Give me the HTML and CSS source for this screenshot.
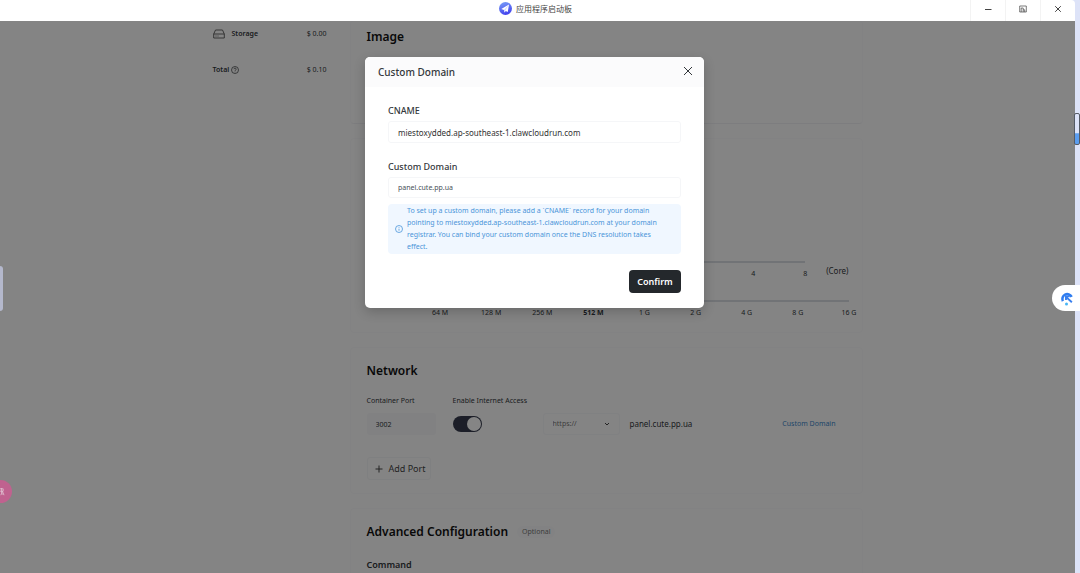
FILE: index.html
```
<!DOCTYPE html>
<html lang="en">

<head>
    <meta charset="UTF-8">
    <meta name="viewport" content="width=device-width, initial-scale=1.0">
    <title>Custom Domain</title>
    <link rel="stylesheet" href="styles.css">
</head>

<body>
    <div class="window">
        <header class="titlebar">
            <div class="app-title">
                <svg class="app-icon" viewBox="0 0 26 26">
                    <defs>
                        <linearGradient id="iconFill" x1="0" y1="0" x2="0.3" y2="1">
                            <stop offset="0" stop-color="#7aa2f7"/>
                            <stop offset="1" stop-color="#4545ee"/>
                        </linearGradient>
                    </defs>
                    <circle cx="13" cy="13" r="13" fill="url(#iconFill)"/>
                    <path d="M20 5 L4.500 14 L10 16 L11 21 L13.500 18 L17.500 20 Z" fill="#fff"/>
                    <path d="M20 5 L10 16 L11 21 L12.500 17 Z" fill="#cdd6ff"/>
                </svg>
                <span lang="zh">应用程序启动板</span>
            </div>
            <div class="window-controls">
                <button type="button" aria-label="Minimize">
                    <svg viewBox="0 0 8 8"><path d="M1 4.500h6.500"/></svg>
                </button>
                <button type="button" aria-label="Restore">
                    <svg class="thin" viewBox="0 0 8 8"><path d="M.7 1h6.600v6H.7z M2.200 7V3h2v4 M4.200 4.800h1.500V7"/></svg>
                </button>
                <button type="button" aria-label="Close window">
                    <svg viewBox="0 0 8 8"><path d="M1.200 1.200l5.600 5.600M6.800 1.200L1.200 6.800"/></svg>
                </button>
            </div>
        </header>

        <div class="workspace">
            <div class="page">
                <aside class="prices">
                    <div class="price-row">
                        <svg class="storage-icon" viewBox="0 0 12 10"><path d="M.7 5L2.500 1h7L11.300 5v4H.7z M.7 5h10.600 M2.500 7h1 M4.500 7h1"/></svg>
                        <b>Storage</b>
                        <span>$ 0.00</span>
                    </div>
                    <div class="price-row">
                        <b>Total</b>
                        <svg class="help-icon" viewBox="0 0 8 8"><circle cx="4" cy="4" r="3.500"/><path d="M2.900 3.200c0-1.500 2.300-1.500 2.300 0 0 .8-1.200.8-1.200 1.700M4 5.600v.6"/></svg>
                        <span>$ 0.10</span>
                    </div>
                </aside>

                <main class="cards">
                    <section class="card image-card">
                        <h2>Image</h2>
                    </section>

                    <section class="card resource-card">
                        <div class="resource-row">
                            <div class="slider">
                                <input type="range" min="0" max="7" value="3" aria-label="CPU">
                                <div class="ticks cpu-ticks">
                                    <span>4</span><span>8</span>
                                </div>
                            </div>
                            <span class="unit">(Core)</span>
                        </div>
                        <div class="resource-row">
                            <div class="slider">
                                <input type="range" min="0" max="8" value="3" aria-label="Memory">
                                <div class="ticks">
                                    <span>64 M</span><span>128 M</span><span>256 M</span><b>512 M</b>
                                    <span>1 G</span><span>2 G</span><span>4 G</span><span>8 G</span><span>16 G</span>
                                </div>
                            </div>
                        </div>
                    </section>

                    <section class="card">
                        <h2>Network</h2>
                        <div class="network-grid">
                            <label for="port">Container Port</label>
                            <label for="access">Enable Internet Access</label>
                            <span></span>
                            <input class="port" id="port" type="text" value="3002">
                            <input class="toggle" id="access" type="checkbox" checked>
                            <div class="address">
                                <div class="select-box">
                                    <select aria-label="Protocol">
                                        <option>https://</option>
                                    </select>
                                    <svg viewBox="0 0 6 6"><path d="M1 2l2 2 2-2"/></svg>
                                </div>
                                <span class="host">panel.cute.pp.ua</span>
                                <a href="#domain">Custom Domain</a>
                            </div>
                        </div>
                        <button class="add-port" type="button">
                            <svg viewBox="0 0 8 8"><path d="M4 .5v7M.5 4h7"/></svg>
                            Add Port
                        </button>
                    </section>

                    <section class="card">
                        <div class="advanced-head">
                            <h2>Advanced Configuration</h2>
                            <span class="badge">Optional</span>
                        </div>
                        <h3>Command</h3>
                    </section>
                </main>
            </div>

            <div class="overlay">
                <div class="modal" role="dialog" aria-labelledby="modalTitle">
                    <div class="modal-header">
                        <h2 id="modalTitle">Custom Domain</h2>
                        <button class="modal-close" type="button" aria-label="Close">
                            <svg viewBox="0 0 10 10"><path d="M1 1l8 8M9 1L1 9"/></svg>
                        </button>
                    </div>
                    <form class="modal-body">
                        <label for="cname">CNAME</label>
                        <input class="cname" id="cname" type="text" value="miestoxydded.ap-southeast-1.clawcloudrun.com" readonly>
                        <label for="domain">Custom Domain</label>
                        <input id="domain" type="text" value="panel.cute.pp.ua">
                        <div class="notice">
                            <svg viewBox="0 0 8 8"><circle cx="4" cy="4" r="3.500"/><path d="M4 3.700v2M4 2.100v.7"/></svg>
                            <p>To set up a custom domain, please add a `CNAME` record for your domain pointing to miestoxydded.ap-southeast-1.clawcloudrun.com at your domain registrar. You can bind your custom domain once the DNS resolution takes effect.</p>
                        </div>
                        <button class="confirm" type="button">Confirm</button>
                    </form>
                </div>
            </div>
        </div>
    </div>

    <!-- floating desktop widgets -->
    <div class="side-handle"></div>
    <div class="scroll-marker"></div>
    <button class="translate-bubble" type="button" aria-label="Translate">
        <svg viewBox="0 0 10 10"><path d="M0 1h4v3H0M2 0v6M1 9l2-5 2 5M2 7.500h2"/></svg>
    </button>
    <button class="assistant-tab" type="button" aria-label="Assistant">
        <svg viewBox="0 0 12 14">
            <path d="M2.600 9.500A4.500 4.500 0 1 1 10.800 5.500" stroke="#2f7df0" stroke-width="2.400"/>
            <path d="M5 5l6 5.500M5.500 8.500V5h3.500" stroke="#3a80ee" stroke-width="1.800"/>
            <circle cx="6" cy="12.200" r="1.400" fill="#48b5f5" stroke="none"/>
        </svg>
    </button>
</body>

</html>
```
FILE: styles.css
```
* {
    box-sizing: border-box;
}

body {
    margin: 0;
    height: 100vh;
    overflow: hidden;
    position: relative;
    background: #dde3f8;
    color: #33373b;
    font-family: "Noto Sans", "Open Sans", "Noto Sans CJK SC", sans-serif;
    font-size: 7px;
    line-height: 12px;
}

h2,
h3,
p {
    margin: 0;
}

button,
input,
select {
    font: inherit;
    color: inherit;
    margin: 0;
    padding: 0;
    border: none;
    background: none;
}

svg {
    display: block;
    flex: none;
    fill: none;
    stroke: currentColor;
}

.window {
    height: 100%;
    margin-right: 5px;
    display: flex;
    flex-direction: column;
    border-top-right-radius: 4px;
    overflow: hidden;
}

/* title bar */
.titlebar {
    display: grid;
    grid-template-columns: 1fr auto 1fr;
    height: 21px;
    background: #fff;
}

.app-title {
    grid-column: 2;
    display: flex;
    align-items: center;
    gap: 4px;
    height: 17px;
    padding-right: 4px;
    font-family: "Noto Sans CJK SC", sans-serif;
    font-size: 8px;
    color: #444;
}

.app-icon {
    width: 13px;
    height: 13px;
    stroke: none;
}

.window-controls {
    display: flex;
    justify-content: flex-end;
}

.window-controls button {
    width: 35px;
    padding-bottom: 4px;
    border-left: 1px solid #f3f3f3;
    display: flex;
    align-items: center;
    justify-content: center;
    color: #444;
}

.window-controls svg {
    width: 8px;
    height: 8px;
}

.window-controls .thin {
    stroke-width: 0.7;
}

/* page under the overlay */
.workspace {
    flex: 1;
    min-height: 0;
    position: relative;
    overflow: hidden;
    background: #fefefe;
}

.page {
    display: flex;
    gap: 23px;
    max-width: 650px;
    margin: 0 auto;
}

.prices {
    width: 114px;
    padding-top: 7px;
    display: flex;
    flex-direction: column;
    gap: 24px;
}

.price-row {
    display: flex;
    align-items: center;
}

.price-row b {
    font-weight: 600;
}

.price-row span {
    margin-left: auto;
}

.storage-icon {
    width: 12px;
    height: 10px;
    margin-right: 7px;
    color: #666;
}

.help-icon {
    width: 8px;
    height: 8px;
    margin-left: 2px;
    stroke-width: 0.7;
}

.cards {
    flex: 1;
    display: flex;
    flex-direction: column;
    gap: 14px;
}

.card {
    padding: 14px 13px 13px 16px;
    border: 1px solid #f9f9fb;
    border-radius: 4px;
}

.card h2 {
    font-size: 12px;
    line-height: 18px;
    font-weight: 600;
    color: #111;
}

.card h3 {
    margin-top: 17px;
    font-size: 9px;
    line-height: 14px;
    font-weight: 600;
}

.image-card {
    height: 103px;
    padding-top: 7px;
    border-top: none;
    border-bottom-color: #f0f0f3;
}

.resource-card {
    min-height: 195px;
    display: flex;
    flex-direction: column;
    justify-content: flex-end;
    gap: 20px;
}

.resource-row {
    display: flex;
    align-items: center;
    padding-left: 74px;
    gap: 21px;
}

.slider {
    flex: 1;
}

.slider input {
    appearance: none;
    display: block;
    width: 100%;
    height: 2px;
    background: #d8dde2;
}

.slider input::-webkit-slider-thumb {
    appearance: none;
    width: 8px;
    height: 8px;
    border-radius: 50%;
    background: #24282c;
}

.ticks {
    display: grid;
    grid-auto-flow: column;
    grid-auto-columns: 1fr;
    margin: 5px -26px 0;
    text-align: center;
}

.cpu-ticks {
    grid-auto-columns: 52px;
    justify-content: end;
}

.ticks b {
    font-weight: 700;
}

.unit {
    font-size: 8px;
}

.network-grid {
    display: grid;
    grid-template-columns: 69px 73px 1fr;
    column-gap: 17px;
    row-gap: 6px;
    align-items: center;
    margin-top: 15px;
}

.network-grid label {
    white-space: nowrap;
}

.port {
    width: 100%;
    height: 22px;
    padding: 0 9px;
    border-radius: 3px;
    background: #f7f8fa;
}

.toggle {
    appearance: none;
    width: 29px;
    height: 16px;
    padding: 1px;
    display: flex;
    justify-content: flex-end;
    border-radius: 8px;
    background: #363b4d;
}

.toggle::before {
    content: "";
    width: 14px;
    height: 14px;
    border-radius: 50%;
    background: #fff;
}

.address {
    display: flex;
    align-items: center;
    gap: 10px;
    padding: 0 13px 0 0;
}

.select-box {
    display: flex;
    align-items: center;
    width: 77px;
    height: 22px;
    padding: 0 9px;
    border: 1px solid #f6f7f9;
    border-radius: 3px;
    color: #777;
}

.select-box select {
    appearance: none;
    flex: 1;
}

.select-box svg {
    width: 6px;
    height: 6px;
    color: #444;
}

.host {
    font-size: 8px;
    white-space: nowrap;
}

.address a {
    margin-left: auto;
    white-space: nowrap;
    color: #3c86c8;
    text-decoration: none;
}

.add-port {
    display: flex;
    align-items: center;
    gap: 6px;
    height: 23px;
    margin-top: 22px;
    padding: 0 4px 0 7px;
    border: 1px solid #f4f5f7;
    border-radius: 3px;
    font-size: 9px;
    color: #444;
}

.add-port svg {
    width: 8px;
    height: 8px;
}

.advanced-head {
    display: flex;
    align-items: center;
    gap: 9px;
}

.badge {
    padding: 0 5px;
    border-radius: 6px;
    background: #f9fafb;
    color: #777;
}

/* modal */
.overlay {
    position: absolute;
    inset: 0;
    padding: 36px 6px 0 0;
    background: rgba(0, 0, 0, 0.48);
}

.modal {
    width: 90%;
    max-width: 339px;
    margin: 0 auto;
    border-radius: 5px;
    overflow: hidden;
    background: #fff;
    box-shadow: 0 4px 12px rgba(0, 0, 0, 0.2);
}

.modal-header {
    display: flex;
    align-items: center;
    justify-content: space-between;
    height: 30px;
    padding: 0 11px 0 13px;
    background: #fbfbfc;
}

.modal-header h2 {
    font-size: 10px;
    line-height: 14px;
    font-weight: 500;
}

.modal-close {
    padding-bottom: 3px;
}

.modal-close svg {
    width: 10px;
    height: 10px;
}

.modal-body {
    display: flex;
    flex-direction: column;
    padding: 17px 23px 15px;
}

.modal-body label {
    margin-bottom: 3px;
    font-size: 9px;
    line-height: 14px;
    font-weight: 500;
}

.modal-body input {
    height: 21px;
    padding: 0 9px;
    border: 1px solid #f5f6f8;
    border-radius: 3px;
    color: #485058;
}

.modal-body .cname {
    height: 22px;
    margin-bottom: 17px;
    font-size: 8px;
    color: #333;
}

.notice {
    display: flex;
    align-items: center;
    gap: 4px;
    margin-top: 6px;
    padding: 1px 14px 1px 7px;
    border-radius: 4px;
    background: #f0f7ff;
    color: #4a95d9;
}

.notice svg {
    width: 8px;
    height: 8px;
    stroke-width: 0.8;
}

.confirm {
    align-self: flex-end;
    width: 52px;
    height: 23px;
    margin-top: 16px;
    border-radius: 4px;
    background: #24282c;
    color: #fff;
    font-size: 9px;
    font-weight: 600;
}

/* floating widgets */
.side-handle {
    position: absolute;
    left: 0;
    top: 266px;
    width: 3px;
    height: 45px;
    border-radius: 0 3px 3px 0;
    background: #b4b8cc;
}

.scroll-marker {
    position: absolute;
    right: 0;
    top: 113px;
    width: 6px;
    height: 32px;
    border: 1px solid #555b66;
    border-radius: 2px;
    background: linear-gradient(#dde3f8 62%, #5a9df0 66%);
}

.translate-bubble {
    position: absolute;
    left: -11px;
    top: 480px;
    width: 23px;
    height: 23px;
    padding-left: 11px;
    border-radius: 50%;
    background: #c0628f;
    color: #e0c0d0;
}

.translate-bubble svg {
    width: 8px;
    height: 10px;
}

.assistant-tab {
    position: absolute;
    right: 0;
    top: 285px;
    width: 28px;
    height: 26px;
    padding-left: 8px;
    border-radius: 13px 0 0 13px;
    background: #fff;
}

.assistant-tab svg {
    width: 13px;
    height: 15px;
}
```
